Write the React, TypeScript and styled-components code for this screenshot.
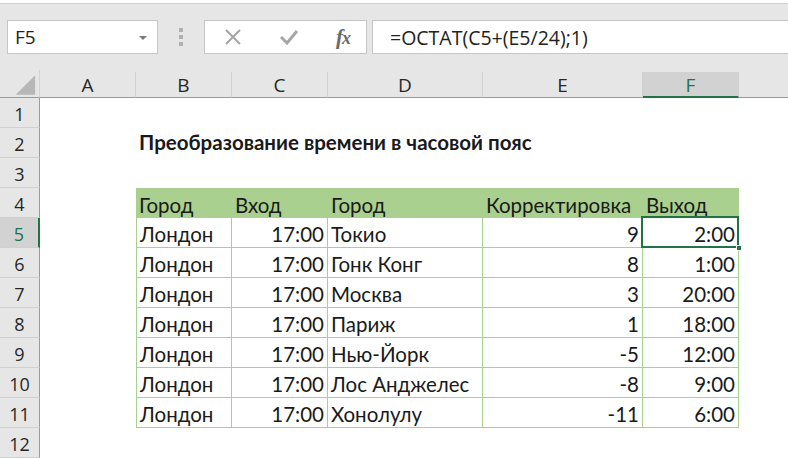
import React from "react";
import styled, { createGlobalStyle } from "styled-components";

const GlobalStyle = createGlobalStyle`
  html, body {
    margin: 0;
    padding: 0;
    background: #ffffff;
    overflow: hidden;
  }
  body {
    font-family: Lato, "Noto Sans", sans-serif;
  }
`;

const COLUMNS = ["A", "B", "C", "D", "E", "F"];
const GREEN = "#a9d08e";
const EXCEL_GREEN = "#217346";

type Row = [string, string, string, string, string];

const headerRow: Row = ["Город", "Вход", "Город", "Корректировка", "Выход"];

const dataRows: Row[] = [
  ["Лондон", "17:00", "Токио", "9", "2:00"],
  ["Лондон", "17:00", "Гонк Конг", "8", "1:00"],
  ["Лондон", "17:00", "Москва", "3", "20:00"],
  ["Лондон", "17:00", "Париж", "1", "18:00"],
  ["Лондон", "17:00", "Нью-Йорк", "-5", "12:00"],
  ["Лондон", "17:00", "Лос Анджелес", "-8", "9:00"],
  ["Лондон", "17:00", "Хонолулу", "-11", "6:00"],
];

// which table columns hold numbers (right aligned)
const numeric = [false, true, false, true, true];

export default function App() {
  return (
    <>
      <GlobalStyle />
      <Page>
        <TopStrip />
        <FormulaBar>
          <NameBox>
            F5
            <Caret />
          </NameBox>
          <Dots>
            <span />
            <span />
            <span />
          </Dots>
          <ButtonsBox>
            <svg width="18" height="18" viewBox="0 0 18 18">
              <path d="M2 2 L16 16 M16 2 L2 16" stroke="#a6a6a6" strokeWidth="2" fill="none" />
            </svg>
            <svg width="20" height="16" viewBox="0 0 20 16">
              <path d="M2 8 L8 14 L18 2" stroke="#a6a6a6" strokeWidth="3" fill="none" />
            </svg>
            <Fx>
              f<i>x</i>
            </Fx>
          </ButtonsBox>
          <FormulaInput>=OCTAT(C5+(E5/24);1)</FormulaInput>
        </FormulaBar>

        <Sheet>
          <Corner>
            <svg width="40" height="28" viewBox="0 0 40 28">
              <polygon points="36,5 36,25 16,25" fill="#b7b7b7" />
            </svg>
          </Corner>
          {COLUMNS.map((c) => (
            <ColHeader key={c} $active={c === "F"}>
              {c}
            </ColHeader>
          ))}
          <ColHeader $active={false} $last />

          {Array.from({ length: 12 }, (_, i) => {
            const r = i + 1;
            const cells: React.ReactNode[] = [];
            cells.push(
              <RowHeader key={`h${r}`} $active={r === 5}>
                {r}
              </RowHeader>
            );
            // column A
            cells.push(<Cell key={`a${r}`} />);

            if (r === 2) {
              cells.push(
                <Cell key="title" $span={6}>
                  <Title>Преобразование времени в часовой пояс</Title>
                </Cell>
              );
            } else if (r === 4) {
              headerRow.forEach((t, ci) => {
                cells.push(
                  <Cell key={`t4${ci}`} $fill>
                    {t}
                  </Cell>
                );
              });
              cells.push(<Cell key="e4" />);
            } else if (r >= 5 && r <= 11) {
              const row = dataRows[r - 5];
              row.forEach((t, ci) => {
                cells.push(
                  <Cell
                    key={`d${r}${ci}`}
                    $right={numeric[ci]}
                    $grid
                    $first={ci === 0}
                    $selected={r === 5 && ci === 4}
                  >
                    {t}
                  </Cell>
                );
              });
              cells.push(<Cell key={`e${r}`} />);
            } else {
              for (let k = 0; k < 6; k++) cells.push(<Cell key={`x${r}${k}`} />);
            }
            return <React.Fragment key={r}>{cells}</React.Fragment>;
          })}
        </Sheet>
      </Page>
    </>
  );
}

const Page = styled.div`
  width: 788px;
  height: 460px;
  overflow: hidden;
  background: #ffffff;
`;

const TopStrip = styled.div`
  height: 4px;
  background: #ffffff;
  border-bottom: 1px solid #d0d0d0;
  box-sizing: border-box;
`;

const FormulaBar = styled.div`
  height: 66px;
  box-sizing: border-box;
  background: #e6e6e6;
  padding: 16px 0 0 7px;
  display: flex;
  align-items: flex-start;
`;

const boxBase = `
  height: 34px;
  box-sizing: border-box;
  background: #ffffff;
  border: 1px solid #c6c6c6;
  display: flex;
  align-items: center;
`;

const NameBox = styled.div`
  ${boxBase}
  width: 151px;
  padding-left: 7px;
  font-family: "Open Sans", "Noto Sans", sans-serif;
  font-size: 19px;
  color: #222222;
  position: relative;
`;

const Caret = styled.span`
  position: absolute;
  right: 10px;
  top: 15px;
  width: 0;
  height: 0;
  border-left: 4px solid transparent;
  border-right: 4px solid transparent;
  border-top: 4px solid #7a7a7a;
`;

const Dots = styled.div`
  width: 46px;
  height: 34px;
  display: flex;
  flex-direction: column;
  align-items: center;
  justify-content: center;
  gap: 3px;
  span {
    width: 4px;
    height: 4px;
    background: #b0b0b0;
  }
`;

const ButtonsBox = styled.div`
  ${boxBase}
  width: 163px;
  padding: 0 16px 0 19px;
  justify-content: space-between;
`;

const Fx = styled.span`
  font-family: "Liberation Serif", "DejaVu Serif", serif;
  font-style: italic;
  font-weight: bold;
  font-size: 21px;
  color: #686868;
  letter-spacing: -1px;
  i {
    font-size: 18px;
  }
`;

const FormulaInput = styled.div`
  ${boxBase}
  margin-left: 5px;
  flex: 1;
  border-right: none;
  padding-left: 17px;
  font-family: "Open Sans", "Noto Sans", sans-serif;
  font-size: 19.5px;
  color: #222222;
`;

const Sheet = styled.div`
  display: grid;
  grid-template-columns: 40px 96px 96px 96px 155px 160px 96px 1fr;
  grid-template-rows: 28px repeat(12, 30px);
`;

const Corner = styled.div`
  background: #e6e6e6;
  border-bottom: 1px solid #9b9b9b;
  border-right: 1px solid #d4d4d4;
  box-sizing: border-box;
  display: flex;
`;

const ColHeader = styled.div<{ $active: boolean; $last?: boolean }>`
  box-sizing: border-box;
  margin-top: 2px;
  background: ${(p) => (p.$active ? "#d2d2d2" : "#e6e6e6")};
  border-right: ${(p) => (p.$last ? "none" : "1px solid #d0d0d0")};
  border-bottom: ${(p) => (p.$active ? `2px solid ${EXCEL_GREEN}` : "1px solid #9b9b9b")};
  color: ${(p) => (p.$active ? EXCEL_GREEN : "#262626")};
  font-family: "Open Sans", "Noto Sans", sans-serif;
  font-size: 19px;
  display: flex;
  align-items: center;
  justify-content: center;
  padding-top: 1px;
  box-shadow: 0 -2px 0 #e6e6e6;
`;

const RowHeader = styled.div<{ $active: boolean }>`
  box-sizing: border-box;
  background: ${(p) => (p.$active ? "#d2d2d2" : "#e6e6e6")};
  border-bottom: 1px solid #d0d0d0;
  border-right: ${(p) => (p.$active ? `2px solid ${EXCEL_GREEN}` : "1px solid #9b9b9b")};
  color: ${(p) => (p.$active ? EXCEL_GREEN : "#262626")};
  font-family: "Open Sans", "Noto Sans", sans-serif;
  font-size: 18px;
  display: flex;
  align-items: center;
  justify-content: center;
  padding-top: 2px;
`;

const Cell = styled.div<{
  $span?: number;
  $fill?: boolean;
  $grid?: boolean;
  $first?: boolean;
  $right?: boolean;
  $selected?: boolean;
}>`
  box-sizing: border-box;
  position: relative;
  grid-column: ${(p) => (p.$span ? `span ${p.$span}` : "auto")};
  background: ${(p) => (p.$fill ? GREEN : "#ffffff")};
  border-right: ${(p) => (p.$grid ? `1px solid ${GREEN}` : "none")};
  border-bottom: ${(p) => (p.$grid ? `1px solid ${GREEN}` : "none")};
  border-left: ${(p) => (p.$first ? `1px solid ${GREEN}` : "none")};
  display: flex;
  align-items: flex-end;
  justify-content: ${(p) => (p.$right ? "flex-end" : "flex-start")};
  padding: 0 3px 1px 3px;
  font-family: Lato, "Noto Sans", sans-serif;
  font-size: 20.5px;
  color: #1a1a1a;
  white-space: nowrap;
  overflow: visible;

  ${(p) =>
    p.$selected &&
    `
    &::after {
      content: "";
      position: absolute;
      left: -2px;
      top: -2px;
      right: -1px;
      bottom: -1px;
      border: 2px solid ${EXCEL_GREEN};
      pointer-events: none;
    }
    &::before {
      content: "";
      position: absolute;
      right: -4px;
      bottom: -4px;
      width: 6px;
      height: 6px;
      background: ${EXCEL_GREEN};
      border: 1px solid #ffffff;
      box-sizing: border-box;
      z-index: 2;
    }
  `}
`;

const Title = styled.span`
  font-weight: bold;
  font-size: 20.5px;
  font-family: Lato, "Noto Sans", sans-serif;
  margin-bottom: 3px;
`;
